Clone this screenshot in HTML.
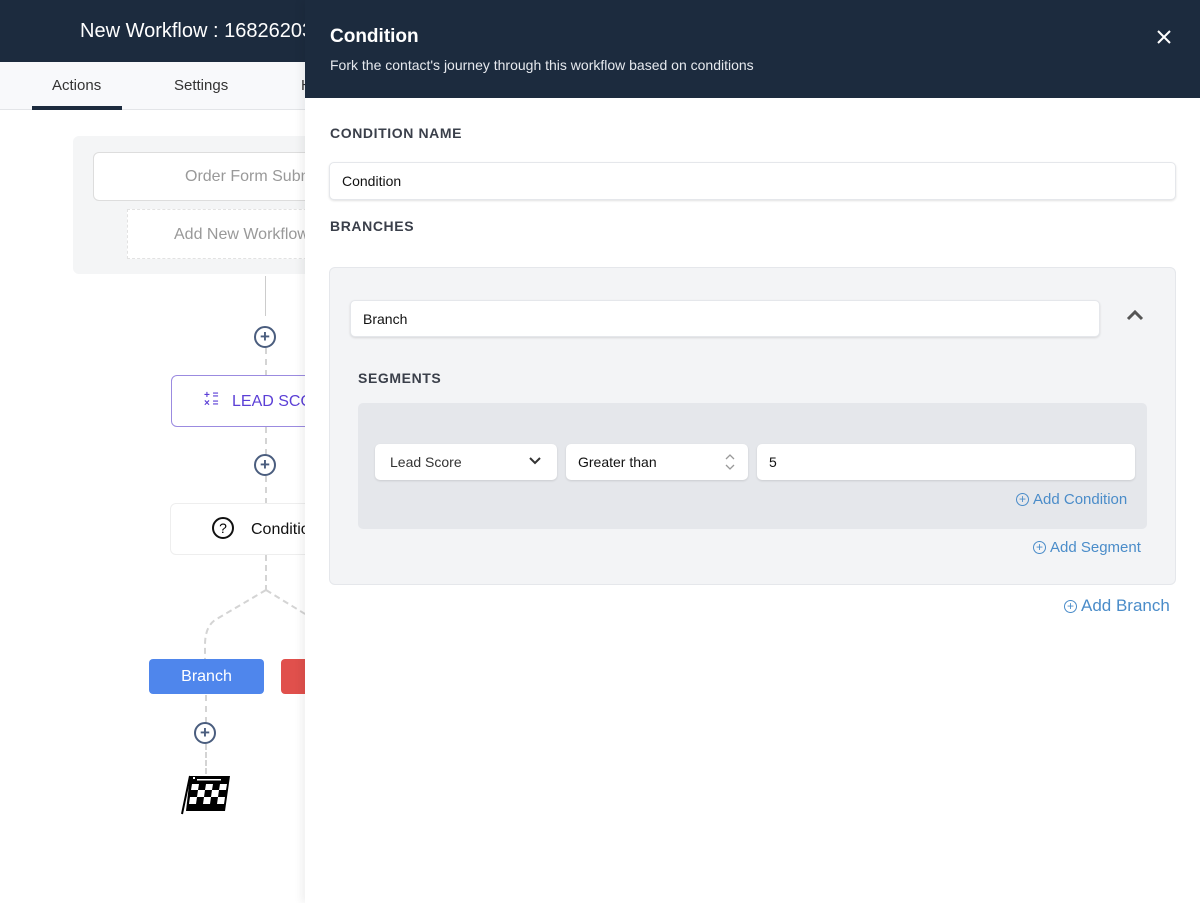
<!DOCTYPE html>
<html><head><meta charset="utf-8"><style>
*{box-sizing:border-box;margin:0;padding:0}
body{width:1200px;height:903px;overflow:hidden;font-family:"Liberation Sans",sans-serif;background:#fff;position:relative}
.a{position:absolute}
.dash{position:absolute;border-left:2px dashed #d4d4d4;width:0}
.inp{position:absolute;background:#fff;border-radius:5px;box-shadow:0 1px 2px rgba(0,0,0,.12);border:1px solid #e5e7eb;font-size:14px;color:#111;padding-left:12px;display:flex;align-items:center}
.lbl{position:absolute;font-size:14px;font-weight:bold;letter-spacing:.6px;color:#3a3f4a}
.link{position:absolute;color:#4a8cc9;font-size:15px;display:flex;align-items:center;gap:4px}
.link i{display:inline-block;width:13px;height:13px;border:1px solid #4a8cc9;border-radius:50%;font-style:normal;font-size:12px;line-height:11px;text-align:center}
.pl{position:absolute;width:22px;height:22px;border:2px solid #4a5d7e;border-radius:50%;background:#fff;text-align:center;color:#4a5d7e;font-weight:bold;font-size:17px;line-height:18px}
</style></head><body>
<div class="a" style="left:0;top:0;width:1200px;height:62px;background:#1c2b3e"></div>
<div class="a" style="left:80px;top:20px;color:#fff;font-size:20px">New Workflow : 16826203</div>
<div class="a" style="left:0;top:62px;width:305px;height:48px;background:#f8f9fb;border-bottom:1px solid #e3e5e8"></div>
<div class="a" style="left:52px;top:77px;font-size:15px;color:#333">Actions</div>
<div class="a" style="left:32px;top:106px;width:90px;height:4px;background:#1c2b3e"></div>
<div class="a" style="left:174px;top:77px;font-size:15px;color:#333">Settings</div>
<div class="a" style="left:301px;top:77px;font-size:15px;color:#333">H</div>
<div class="a" style="left:73px;top:136px;width:240px;height:138px;background:#f4f5f6;border-radius:6px"></div>
<div class="a" style="left:93px;top:152px;width:230px;height:49px;background:#fff;border:1px solid #ddd;border-radius:6px;color:#999;font-size:16px;padding:15px 0 0 91px;white-space:nowrap;overflow:hidden">Order Form Submitted</div>
<div class="a" style="left:127px;top:209px;width:200px;height:50px;background:#fff;border:1px dashed #e2e2e2;color:#999;font-size:16px;padding:16px 0 0 46px;white-space:nowrap;overflow:hidden">Add New Workflow</div>
<div class="dash" style="left:265px;top:276px;height:40px;border-left:1px solid #ccc"></div>
<div class="pl" style="left:254px;top:326px">+</div>
<div class="dash" style="left:265px;top:348px;height:28px"></div>
<div class="a" style="left:171px;top:375px;width:150px;height:52px;border:1px solid #9b8be0;border-radius:6px;background:#fff;color:#5b3fd6;font-size:16px;padding:17px 0 0 60px;white-space:nowrap">LEAD SCORE</div>
<div class="a" style="left:204px;top:392px;color:#5b3fd6;font-size:10px;line-height:8px;font-weight:bold">+ =<br>× =</div>
<div class="dash" style="left:265px;top:427px;height:28px"></div>
<div class="pl" style="left:254px;top:454px">+</div>
<div class="dash" style="left:265px;top:476px;height:28px"></div>
<div class="a" style="left:170px;top:503px;width:150px;height:52px;border:1px solid #eee;border-radius:6px;background:#fff;color:#111;font-size:16px;padding:17px 0 0 80px;white-space:nowrap">Condition</div>
<div class="a" style="left:212px;top:517px;width:22px;height:22px;border:2px solid #111;border-radius:50%;text-align:center;font-size:14px;line-height:18px">?</div>
<svg class="a" style="left:0;top:555px" width="320" height="110"><path d="M266 0 V35 M266 35 L215 65 Q205 72 205 90 V104 M266 35 L310 62" stroke="#d4d4d4" stroke-width="2" fill="none" stroke-dasharray="6 4"/></svg>
<div class="a" style="left:149px;top:659px;width:115px;height:35px;background:#4f86ec;border-radius:4px;color:#fff;font-size:16px;text-align:center;line-height:35px">Branch</div>
<div class="a" style="left:281px;top:659px;width:40px;height:35px;background:#e0504c;border-radius:4px"></div>
<div class="dash" style="left:205px;top:695px;height:28px"></div>
<div class="pl" style="left:194px;top:722px">+</div>
<div class="dash" style="left:205px;top:744px;height:30px"></div>
<svg class="a" style="left:180px;top:774px" width="52" height="42">
<path d="M10 2 H50 L45 37 H6 Z" fill="#000"/>
<g fill="#fff">
<rect x="13" y="3" width="2" height="2"/><rect x="17" y="5" width="24" height="1.5"/>
<polygon points="12,10 19,10 18,16 11,16"/><polygon points="26,10 33,10 32,16 25,16"/><polygon points="40,10 47,10 46,16 39,16"/>
<polygon points="18,16 25,16 24,23 17,23"/><polygon points="32,16 39,16 38,23 31,23"/>
<polygon points="10,23 17,23 16,30 9,30"/><polygon points="24,23 31,23 30,30 23,30"/><polygon points="38,23 45,23 44,30 37,30"/>
</g>
<path d="M10 2 L2 40" stroke="#000" stroke-width="2"/></svg>
<div class="a" style="left:305px;top:0;width:895px;height:903px;background:#fff;box-shadow:-4px 0 8px rgba(0,0,0,.06)"></div>
<div class="a" style="left:305px;top:0;width:895px;height:98px;background:#1c2b3e"></div>
<div class="a" style="left:330px;top:26px;color:#fff;font-size:19px;font-weight:bold">Condition</div>
<div class="a" style="left:330px;top:57px;color:#e6e9ee;font-size:14px">Fork the contact's journey through this workflow based on conditions</div>
<svg class="a" style="left:1156px;top:29px" width="16" height="16"><path d="M2 2 L14 14 M14 2 L2 14" stroke="#fff" stroke-width="2"/></svg>
<div class="lbl" style="left:330px;top:125px">CONDITION NAME</div>
<div class="inp" style="left:329px;top:162px;width:847px;height:38px">Condition</div>
<div class="lbl" style="left:330px;top:218px">BRANCHES</div>
<div class="a" style="left:329px;top:267px;width:847px;height:318px;background:#f3f4f6;border:1px solid #e5e7eb;border-radius:6px"></div>
<div class="inp" style="left:350px;top:300px;width:750px;height:37px">Branch</div>
<svg class="a" style="left:1125px;top:308px" width="20" height="14"><path d="M3 11 L10 4 L17 11" stroke="#555" stroke-width="3" fill="none"/></svg>
<div class="lbl" style="left:358px;top:370px">SEGMENTS</div>
<div class="a" style="left:358px;top:403px;width:789px;height:126px;background:#e5e7eb;border-radius:5px"></div>
<div class="inp" style="left:375px;top:444px;width:182px;height:36px;color:#333;padding-left:15px;border:none">Lead Score</div>
<svg class="a" style="left:528px;top:456px" width="14" height="10"><path d="M2 2 L7 7 L12 2" stroke="#333" stroke-width="2" fill="none"/></svg>
<div class="inp" style="left:566px;top:444px;width:182px;height:36px;border:none">Greater than</div>
<svg class="a" style="left:724px;top:453px" width="12" height="18"><path d="M2 6 L6 2 L10 6 M2 12 L6 16 L10 12" stroke="#999" stroke-width="1.3" fill="none"/></svg>
<div class="inp" style="left:757px;top:444px;width:378px;height:36px;border:none">5</div>
<div class="link" style="left:1016px;top:491px"><i>+</i>Add Condition</div>
<div class="link" style="left:1033px;top:539px"><i>+</i>Add Segment</div>
<div class="link" style="left:1064px;top:596px;font-size:17px"><i>+</i>Add Branch</div>
</body></html>
